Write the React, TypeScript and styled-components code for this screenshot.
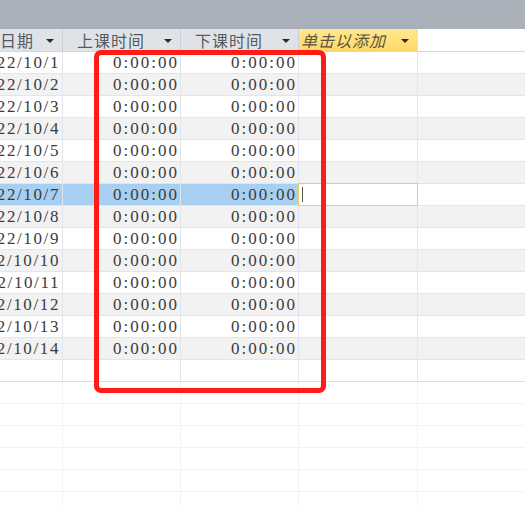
import styled, { createGlobalStyle } from 'styled-components';

const GlobalStyle = createGlobalStyle`
  html, body {
    margin: 0;
    padding: 0;
    background: #ffffff;
  }
`;

const DATES = Array.from({ length: 14 }, (_, i) => `2022/10/${i + 1}`);
const SELECTED = 6;
const EMPTY_ROWS = 6;

const COLS = '63px 118px 118px 119px 1fr';

const App = () => {
  return (
    <Page>
      <GlobalStyle />
      <TopBar />
      <Sheet>
        <HeaderRow>
          <HeadCell>
            <HeadText>日期</HeadText>
            <Arrow />
          </HeadCell>
          <HeadCell>
            <HeadText>上课时间</HeadText>
            <Arrow />
          </HeadCell>
          <HeadCell>
            <HeadText>下课时间</HeadText>
            <Arrow />
          </HeadCell>
          <AddCell>
            <AddText>单击以添加</AddText>
            <Arrow />
          </AddCell>
          <BlankHead />
        </HeaderRow>

        {DATES.map((date, i) => (
          <Row key={date} $odd={i % 2 === 1} $selected={i === SELECTED}>
            <DateCell>
              <span>{date}</span>
            </DateCell>
            <TimeCell>0:00:00</TimeCell>
            <TimeCell>0:00:00</TimeCell>
            {i === SELECTED ? (
              <EditCell>
                <Caret />
              </EditCell>
            ) : (
              <Cell />
            )}
            <OuterCell />
          </Row>
        ))}

        <NewRow>
          <Cell />
          <Cell />
          <Cell />
          <Cell />
          <OuterCell />
        </NewRow>

        {Array.from({ length: EMPTY_ROWS }, (_, i) => (
          <EmptyRow key={i}>
            <FaintCell />
            <FaintCell />
            <FaintCell />
            <FaintCell />
            <FaintCell />
          </EmptyRow>
        ))}
      </Sheet>
      <Highlight />
    </Page>
  );
};

export default App;

const Page = styled.div`
  position: relative;
  width: 525px;
  height: 506px;
  overflow: hidden;
  background: #ffffff;
`;

const TopBar = styled.div`
  height: 29px;
  background: #a9b0ba;
`;

const Sheet = styled.div`
  display: flex;
  flex-direction: column;
`;

const HeaderRow = styled.div`
  display: grid;
  grid-template-columns: ${COLS};
  height: 22px;
  background: #dfe3e8;
  border-bottom: 1px solid #d2d7de;
`;

const HeadCell = styled.div`
  display: flex;
  align-items: center;
  justify-content: space-between;
  padding: 0 8px 0 0;
  border-right: 1px solid #cbd0d8;

  &:not(:first-child) {
    padding-left: 14px;
  }
`;

const HeadText = styled.span`
  font-family: 'Noto Sans CJK SC', sans-serif;
  font-size: 16px;
  letter-spacing: 1px;
  color: #555a60;
  white-space: nowrap;
  line-height: 1;
`;

const AddCell = styled(HeadCell)`
  background: linear-gradient(#ffe892, #ffd865);
  border-right: 1px solid #e8e2c8;

  &:not(:first-child) {
    padding-left: 2px;
  }
`;

const AddText = styled(HeadText)`
  font-style: italic;
  color: #5a5440;
`;

const BlankHead = styled.div`
  background: #ffffff;
`;

const Arrow = styled.span`
  width: 0;
  height: 0;
  margin-top: 2px;
  border-left: 4px solid transparent;
  border-right: 4px solid transparent;
  border-top: 4px solid #2a2a2a;
  flex-shrink: 0;
`;

const Row = styled.div<{ $odd: boolean; $selected: boolean }>`
  display: grid;
  grid-template-columns: ${COLS};
  height: 22px;
  box-sizing: border-box;
  border-bottom: 1px solid #e1e5ec;
  background: ${({ $odd, $selected }) =>
    $selected ? '#a7cff1' : $odd ? '#f2f2f2' : '#ffffff'};
  font-family: 'Liberation Serif', serif;
  font-size: 17px;
  color: #3c3c3c;

  & > div:nth-child(4),
  & > div:nth-child(5) {
    background: ${({ $odd }) => ($odd ? '#f2f2f2' : '#ffffff')};
  }
`;

const Cell = styled.div`
  border-right: 1px solid #e1e5ec;
  overflow: hidden;
`;

const DateCell = styled(Cell)`
  display: flex;
  justify-content: flex-end;
  align-items: center;
  padding-right: 2px;
  white-space: nowrap;
  letter-spacing: 1.6px;
`;

const TimeCell = styled(Cell)`
  display: flex;
  justify-content: flex-end;
  align-items: center;
  padding-right: 1px;
  white-space: nowrap;
  letter-spacing: 2px;
`;

const EditCell = styled.div`
  display: flex;
  align-items: center;
  margin: -1px 0 -1px -1px;
  padding-left: 3px;
  border: 1px solid #f0cc5c;
`;

const Caret = styled.span`
  width: 1px;
  height: 15px;
  background: #555555;
`;

const OuterCell = styled.div``;

const NewRow = styled.div`
  display: grid;
  grid-template-columns: ${COLS};
  height: 22px;
  box-sizing: border-box;
  border-bottom: 1px solid #d9dde5;
  background: #ffffff;
`;

const EmptyRow = styled.div`
  display: grid;
  grid-template-columns: ${COLS};
  height: 22px;
  box-sizing: border-box;
  border-bottom: 1px solid #f1f2f5;
`;

const FaintCell = styled.div`
  border-right: 1px solid #f1f2f5;

  &:last-child {
    border-right: none;
  }
`;

const Highlight = styled.div`
  position: absolute;
  left: 94px;
  top: 50px;
  width: 232px;
  height: 343px;
  box-sizing: border-box;
  border: 5px solid #ff1c16;
  border-radius: 7px;
  pointer-events: none;
`;
